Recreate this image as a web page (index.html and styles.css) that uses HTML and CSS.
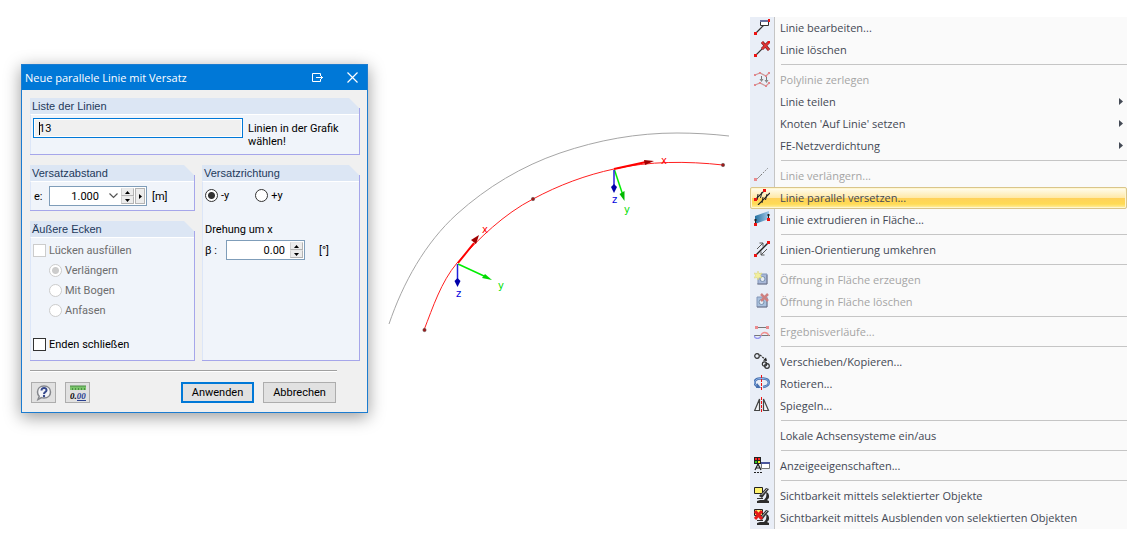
FILE: index.html
```html
<!DOCTYPE html>
<html lang="de">
<head>
    <meta charset="UTF-8">
    <meta name="viewport" content="width=device-width, initial-scale=1.0">
    <title>Neue parallele Linie mit Versatz</title>
    <link rel="stylesheet" href="styles.css">
</head>
<body>
    <!-- Dialog -->
    <form class="dialog">
        <header class="titlebar">
            <h1>Neue parallele Linie mit Versatz</h1>
            <button type="button" class="title-btn" aria-label="Andocken">
                <svg width="12" height="10" viewBox="0 0 12 10"><path d="M8.500 3V.5H.5v8h8V6M4 4.500h7M9.500 3v3" fill="none" stroke="#fff"/></svg>
            </button>
            <button type="button" class="title-btn" aria-label="Schließen">
                <svg width="11" height="11" viewBox="0 0 11 11"><path d="M.5.5l10 10M10.500.5l-10 10" fill="none" stroke="#fff" stroke-width="1.200"/></svg>
            </button>
        </header>

        <div class="dialog-body">
            <section class="group group-lines">
                <h2>Liste der Linien</h2>
                <div class="group-content lines-row">
                    <input type="text" id="lines" class="lines-input" value="13">
                    <label for="lines">Linien in der Grafik wählen!</label>
                </div>
            </section>

            <div class="columns">
                <div class="column">
                    <section class="group">
                        <h2>Versatzabstand</h2>
                        <div class="group-content field-row">
                            <label for="offset">e:</label>
                            <div class="field offset-field">
                                <input type="text" id="offset" value="1.000">
                                <button type="button" class="drop" aria-label="Liste öffnen">
                                    <svg width="9" height="6" viewBox="0 0 9 6"><path d="M.5.5l4 4 4-4" fill="none" stroke="#555" stroke-width="1.200"/></svg>
                                </button>
                                <div class="spin">
                                    <button type="button" aria-label="Mehr"><svg width="5" height="3" viewBox="0 0 5 3"><path d="M0 3h5L2.500 0z"/></svg></button>
                                    <button type="button" aria-label="Weniger"><svg width="5" height="3" viewBox="0 0 5 3"><path d="M0 0h5L2.500 3z"/></svg></button>
                                </div>
                                <button type="button" class="more" aria-label="Auswahl"><svg width="3" height="5" viewBox="0 0 3 5"><path d="M0 0v5l3-2.500z"/></svg></button>
                            </div>
                            <span>[m]</span>
                        </div>
                    </section>

                    <section class="group group-grow">
                        <h2>Äußere Ecken</h2>
                        <div class="group-content options">
                            <label class="option"><input type="checkbox" disabled> Lücken ausfüllen</label>
                            <label class="option sub"><input type="radio" name="corner" checked disabled> Verlängern</label>
                            <label class="option sub"><input type="radio" name="corner" disabled> Mit Bogen</label>
                            <label class="option sub"><input type="radio" name="corner" disabled> Anfasen</label>
                            <label class="option last"><input type="checkbox"> Enden schließen</label>
                        </div>
                    </section>
                </div>

                <section class="group">
                    <h2>Versatzrichtung</h2>
                    <div class="group-content direction">
                        <div class="radio-row">
                            <label class="option"><input type="radio" name="dir" checked> -y</label>
                            <label class="option"><input type="radio" name="dir"> +y</label>
                        </div>
                        <p>Drehung um x</p>
                        <div class="field-row">
                            <label for="beta">β :</label>
                            <div class="field beta-field">
                                <input type="text" id="beta" value="0.00">
                                <div class="spin">
                                    <button type="button" aria-label="Mehr"><svg width="5" height="3" viewBox="0 0 5 3"><path d="M0 3h5L2.500 0z"/></svg></button>
                                    <button type="button" aria-label="Weniger"><svg width="5" height="3" viewBox="0 0 5 3"><path d="M0 0h5L2.500 3z"/></svg></button>
                                </div>
                            </div>
                            <span class="unit">[°]</span>
                        </div>
                    </div>
                </section>
            </div>

            <footer class="dialog-footer">
                <button type="button" class="tool-btn" aria-label="Hilfe">
                    <svg width="16" height="16" viewBox="0 0 16 16">
                        <path d="M8 1c4 0 6.500 2.500 6.500 6S12 13 8 13c-1 0-2-.2-2.500-.4L2 14.500l1.200-3.300C2 10 1.500 8.500 1.500 7 1.500 3.500 4 1 8 1z" fill="#f4f5f8" stroke="#85878c" stroke-width="1.500"/>
                        <path d="M5.500 5.500C5.500 2 10.800 2.300 10.500 5.300 10.300 7 8 7 8 9" fill="none" stroke="#35488c" stroke-width="2"/>
                        <circle cx="8" cy="11" r="1.200" fill="#35488c"/>
                    </svg>
                </button>
                <button type="button" class="tool-btn" aria-label="Einheiten">
                    <svg width="16" height="16" viewBox="0 0 16 16">
                        <path d="M0 1h16v4H0z" fill="#79c56a"/>
                        <path d="M0 1h16M2.500 3v2M5.500 3v2M8.500 3v2M11.500 3v2M14.500 3v2" fill="none" stroke="#4d8a46"/>
                        <text x="0" y="14" class="digits">0.<tspan fill="#2b4191">00</tspan></text>
                        <path d="M7 15.500h9" stroke="#2b4191"/>
                    </svg>
                </button>
                <button type="submit" class="push primary">Anwenden</button>
                <button type="button" class="push">Abbrechen</button>
            </footer>
        </div>
    </form>

    <!-- Line geometry with local axes -->
    <svg class="plot" viewBox="389 131 340 202" role="img" aria-label="Parallele Linie">
        <path d="M389 324C403 283 425 243 457 214 487 187 522 166 560 153 598 140 637 133 677 133 694 133 712 134 729 136" fill="none" stroke="#a6a6a6"/>
        <path d="M424 330C433 307 441 282 457 263 479 238 504 214 533 199 559 185 586 175 614 169 649 161 687 161 723 165" fill="none" stroke="#ff2020"/>
        <g fill="#a01818" stroke="#555" stroke-width=".5">
            <circle cx="424.500" cy="330" r="1.700"/>
            <circle cx="533" cy="199" r="1.700"/>
            <circle cx="723" cy="165" r="1.700"/>
        </g>

        <path d="M458 263l16-20" stroke="#f00" stroke-width="2"/>
        <path d="M479 235l-8 5 5 4z" fill="#a00000"/>
        <path d="M458 264l26 12" stroke="#0e0" stroke-width="1.500"/>
        <path d="M492 280l-7-6-3 4z" fill="#00d800"/>
        <path d="M457.500 264v17" stroke="#22d" stroke-width="1.500"/>
        <path d="M457.500 287l-3-6 3-3 3 3z" fill="#00a"/>
        <text x="482" y="233" fill="#f00">x</text>
        <text x="498" y="289" fill="#0d0">y</text>
        <text x="456" y="297" fill="#00d">z</text>

        <path d="M614 169l32-7" stroke="#f00" stroke-width="2"/>
        <path d="M654 161l-10-1 1 5z" fill="#a00000"/>
        <path d="M614.500 170l8 24" stroke="#0e0" stroke-width="1.500"/>
        <path d="M624.500 201l-5-7 5-3z" fill="#00b800"/>
        <path d="M614 170v17" stroke="#22d" stroke-width="1.500"/>
        <path d="M614 193l-3-6 3-3 3 3z" fill="#00a"/>
        <text x="661" y="164" fill="#f00">x</text>
        <text x="624" y="213" fill="#0d0">y</text>
        <text x="612" y="203" fill="#00d">z</text>
    </svg>

    <!-- Context menu -->
    <ul class="menu">
        <li><button type="button">
            <svg class="icon" viewBox="0 0 16 16"><path d="M2 14l8-8" stroke="#333" stroke-width="1.200"/><path d="M6.500 1.500h8v5h-8z" fill="#fff" stroke="#333"/><path d="M6 1h8v2H6z" fill="#68719f"/><path d="M0 13h3v3H0zM14 0h2v3h-2z" fill="#e11"/></svg>
            Linie bearbeiten...</button></li>
        <li><button type="button">
            <svg class="icon" viewBox="0 0 16 16"><path d="M2 14L14 2" stroke="#333" stroke-width="1.200"/><path d="M8 1l7 8M15 1L8 8" stroke="#7a2020" stroke-width="3"/><path d="M8 1l7 8M15 1L8 8" stroke="#e03434" stroke-width="1.800"/><path d="M0 13h3v3H0zM14 0h2v2h-2z" fill="#e11"/></svg>
            Linie löschen</button></li>
        <li class="separator"></li>
        <li><button type="button" disabled>
            <svg class="icon" viewBox="0 0 16 16"><path d="M1 4l5-2 6 3 3-3M1 14l5-2 6 3 3-3" fill="none" stroke="#c99" stroke-width="1.200"/><path d="M7.500 5v5M12.500 6v5" stroke="#777"/><path d="M5.500 8h4l-2 3zM10.500 9h4l-2 3z" fill="#888"/><path d="M0 3h2v2H0zM5 1h2v2H5zM11 4h2v2h-2zM14 1h2v2h-2zM0 13h2v2H0zM5 11h2v2H5zM11 14h2v2h-2zM14 11h2v2h-2z" fill="#e4868c"/></svg>
            Polylinie zerlegen</button></li>
        <li><button type="button"><span class="icon"></span>Linie teilen<svg class="arrow" viewBox="0 0 4 7"><path d="M0 0v7l4-3.500z"/></svg></button></li>
        <li><button type="button"><span class="icon"></span>Knoten 'Auf Linie' setzen<svg class="arrow" viewBox="0 0 4 7"><path d="M0 0v7l4-3.500z"/></svg></button></li>
        <li><button type="button"><span class="icon"></span>FE-Netzverdichtung<svg class="arrow" viewBox="0 0 4 7"><path d="M0 0v7l4-3.500z"/></svg></button></li>
        <li class="separator"></li>
        <li><button type="button" disabled>
            <svg class="icon" viewBox="0 0 16 16"><path d="M2 13l5-5" stroke="#999"/><path d="M7 8l7-7" stroke="#777" stroke-dasharray="1.500 1.500"/><path d="M0 11h3v3H0z" fill="#ea8b8f"/></svg>
            Linie verlängern...</button></li>
        <li><button type="button" class="active">
            <svg class="icon" viewBox="0 0 16 16"><path d="M1 11L11 1M4 16L16 4" stroke="#222" stroke-width="1.200"/><path d="M4 5L3 11M8 3L6.500 9M9 8l-1 6M13 5l-1.500 6" stroke="#222"/><path d="M0 9h3v3H0zM9 0h3v3H9z" fill="#e11"/></svg>
            Linie parallel versetzen...</button></li>
        <li><button type="button">
            <svg class="icon" viewBox="0 0 16 16"><defs><linearGradient id="face"><stop offset="0" stop-color="#24709f"/><stop offset="1" stop-color="#a3c9ea"/></linearGradient></defs><path d="M1 5l14-5v8L1 13z" fill="url(#face)"/><path d="M1.500 8v5M14.500 3v5M0 9h3M13 4h3" stroke="#222"/><path d="M0 12h3v3H0zM13 7h3v3h-3z" fill="#e11"/></svg>
            Linie extrudieren in Fläche...</button></li>
        <li class="separator"></li>
        <li><button type="button">
            <svg class="icon" viewBox="0 0 16 16"><path d="M2 14L14 2" stroke="#222" stroke-width="1.400"/><path d="M3 8l6-6M5.500 2H9v3.500M13 8l-6 6M7 10.500V14h3.500" fill="none" stroke="#555"/><path d="M0 13h3v3H0zM13 0h3v3h-3z" fill="#e11"/></svg>
            Linien-Orientierung umkehren</button></li>
        <li class="separator"></li>
        <li><button type="button" disabled>
            <svg class="icon" viewBox="0 0 16 16"><path d="M4 3h9v10H4z" fill="#a9b9da" stroke="#8296b8"/><path d="M13 4v9H3" fill="none" stroke="#667" stroke-width=".7"/><circle cx="8.500" cy="8" r="2.500" fill="#e6edf5" stroke="#7890ad"/><path d="M4 0l1 2.500L8 2 6.500 4.500 8 7 5 6.500 4 9 3 6.500 0 7l1.500-2.500L0 2l3 .5z" fill="#f2ee9c" stroke="#d6d27c" stroke-width=".5"/></svg>
            Öffnung in Fläche erzeugen</button></li>
        <li><button type="button" disabled>
            <svg class="icon" viewBox="0 0 16 16"><path d="M3 4h10v10H3z" fill="#a9c0dd" stroke="#8296b8"/><path d="M13 5v9H3" fill="none" stroke="#667" stroke-width=".7"/><circle cx="7.500" cy="9" r="2.500" fill="#e6edf5" stroke="#7890ad"/><path d="M7 1l7 7M14 1L7 8" stroke="#ce8080" stroke-width="2.500"/></svg>
            Öffnung in Fläche löschen</button></li>
        <li class="separator"></li>
        <li><button type="button" disabled>
            <svg class="icon" viewBox="0 0 16 16"><path d="M2 4.500h12M0 12.500h16" stroke="#777"/><path d="M1 3h3v3H1zM12 3h3v3h-3z" fill="#ea8b8f"/><path d="M0 12.500c1 4 6 4 7 0" fill="none" stroke="#9494f0" stroke-width="1.300"/><path d="M7 12.500c1-4 6-4 8 0" fill="none" stroke="#f09090" stroke-width="1.300"/></svg>
            Ergebnisverläufe...</button></li>
        <li class="separator"></li>
        <li><button type="button">
            <svg class="icon" viewBox="0 0 16 16"><g fill="none" stroke="#333" stroke-width="1.200"><circle cx="3" cy="3" r="2.300"/><circle cx="10.500" cy="11" r="2.200"/><circle cx="13" cy="13" r="2.300"/><path d="M6 2l6 5" stroke-dasharray="2 1"/></g><path d="M13 8l-4-.5 3-3z" fill="#222"/></svg>
            Verschieben/Kopieren...</button></li>
        <li><button type="button">
            <svg class="icon" viewBox="0 0 16 16"><path d="M5 12C-1 10-1 4 6 3.500h3C17 4 16.500 11 9 12" fill="none" stroke="#466fae" stroke-width="2.400"/><path d="M5 12C-1 10-1 4 6 3.500h3C17 4 16.500 11 9 12" fill="none" stroke="#8bb0e4" stroke-width="1"/><path d="M2 13l1-5 4 5z" fill="#466fae"/><path d="M7.500 0v16" stroke="#e11" stroke-dasharray="3 1"/></svg>
            Rotieren...</button></li>
        <li><button type="button">
            <svg class="icon" viewBox="0 0 16 16"><path d="M.7 13.500h4.800V2zM14.500 13.500H9.500V2z" fill="#f5f7fa" stroke="#444" stroke-width="1.200"/><path d="M7.500 0v16" stroke="#e11" stroke-dasharray="3 1"/></svg>
            Spiegeln...</button></li>
        <li class="separator"></li>
        <li><button type="button"><span class="icon"></span>Lokale Achsensysteme ein/aus</button></li>
        <li class="separator"></li>
        <li><button type="button">
            <svg class="icon" viewBox="0 0 16 16"><path d="M0 0h7v7H0z" fill="#222"/><path d="M1 1h2v2H1z" fill="#f22"/><path d="M4 1h2v2H4z" fill="#f22"/><path d="M1 4h2v2H1z" fill="#2c2"/><path d="M4 4h2v2H4z" fill="#ee2"/><path d="M4 7L1 13M4 7l3 6M2 11h4" stroke="#222" stroke-width="1.200"/><path d="M0 15.500h8" stroke="#222" stroke-dasharray="2 1"/><path d="M7.500 5.500h8v6h-8z" fill="#fff" stroke="#777"/><path d="M7 5h9v2H7z" fill="#4a559b"/></svg>
            Anzeigeeigenschaften...</button></li>
        <li class="separator"></li>
        <li><button type="button">
            <svg class="icon" viewBox="0 0 16 16"><path d="M.5.5h8v6h-8z" fill="#fff36d" stroke="#222"/><path d="M5 9l7-8 3 1-7 9z" fill="#333"/><path d="M7.500 8L13 2" stroke="#bbb"/><path d="M12 5l2 1c2 3 1 6-1 7l2 1v2H3v-2l3-1h4c2-2 3-4 2-8z" fill="#2c2c2c"/><path d="M3 11h6v1H3z" fill="#333"/></svg>
            Sichtbarkeit mittels selektierter Objekte</button></li>
        <li><button type="button">
            <svg class="icon" viewBox="0 0 16 16"><path d="M.5.5h8v6h-8z" fill="#fff36d" stroke="#222"/><path d="M5 9l7-8 3 1-7 9z" fill="#333"/><path d="M7.500 8L13 2" stroke="#bbb"/><path d="M12 5l2 1c2 3 1 6-1 7l2 1v2H3v-2l3-1h4c2-2 3-4 2-8z" fill="#2c2c2c"/><path d="M3 11h6v1H3z" fill="#333"/><path d="M1 2l7 8M8 2l-7 8" stroke="#e51a1a" stroke-width="3"/></svg>
            Sichtbarkeit mittels Ausblenden von selektierten Objekten</button></li>
    </ul>
</body>
</html>
```

FILE: styles.css
```css
* {
    box-sizing: border-box;
}

body {
    margin: 0;
    padding: 17px 17px 17px 21px;
    display: grid;
    grid-template-columns: minmax(0, 347fr) minmax(0, 340fr) minmax(0, 377fr);
    gap: 21px;
    align-items: start;
    background: #fff;
    color: #000;
    font-family: Roboto, "Liberation Sans", sans-serif;
    font-size: 11px;
    line-height: 13px;
}

h1, h2, p {
    margin: 0;
    font-weight: normal;
}

button, input {
    margin: 0;
    padding: 0;
    font: inherit;
    color: inherit;
}

/* Dialog window */
.dialog {
    margin-top: 47px;
    border: 1px solid #1c7cd0;
    background: #f0f0f0;
    box-shadow: 0 4px 16px rgba(0, 0, 0, 0.4);
}

.titlebar {
    display: flex;
    align-items: center;
    height: 25px;
    padding: 0 7px 0 3px;
    background: #0078d7;
    color: #fff;
}

.titlebar h1 {
    flex: 1;
    font-family: "Open Sans", "Noto Sans", sans-serif;
    font-size: 11px;
}

.title-btn {
    display: flex;
    align-items: center;
    justify-content: center;
    width: 16px;
    height: 16px;
    margin-left: 18px;
    border: none;
    background: none;
}

.dialog-body {
    display: flex;
    flex-direction: column;
    gap: 10px;
    padding: 8px 7px 9px 8px;
}

/* Group boxes with a cut corner */
.group {
    padding: 0 1px 1px 0;
    background:
        linear-gradient(#a6a6ea, #a6a6ea) right bottom / 1px calc(100% - 10px) no-repeat,
        linear-gradient(#a6a6ea, #a6a6ea) left bottom / 100% 1px no-repeat;
    display: flex;
    flex-direction: column;
}

.group h2 {
    height: 16px;
    padding-left: 2px;
    background: #dce6f4;
    clip-path: polygon(0 0, calc(100% - 10px) 0, 100% 10px, 100% 100%, 0 100%);
    color: #1e395b;
    font-family: "Liberation Sans", Arial, sans-serif;
    font-size: 11px;
    line-height: 16px;
}

.group-content {
    flex: 1;
    padding: 4px 3px;
    border-top: 1px solid #fff;
    border-left: 1px solid #dce6f8;
    background: #f0f4fa;
}

.group-lines .group-content {
    padding: 3px 2px 6px;
}

.lines-row {
    display: flex;
    align-items: flex-start;
    gap: 5px;
}

.lines-row label {
    flex: 1;
    padding-top: 4px;
}

/* the thin line left of the value is the text cursor */
.lines-input {
    flex: 0 1 210px;
    min-width: 0;
    height: 20px;
    padding: 0 5px;
    border: 1px solid #0078d7;
    background: linear-gradient(#000, #000) 5px center / 1px 13px no-repeat #f0f0f0;
    box-shadow: inset 0 0 0 1px #fff;
    outline: none;
}

.columns {
    display: grid;
    grid-template-columns: 165fr 158fr;
    gap: 7px;
}

.column {
    display: flex;
    flex-direction: column;
    gap: 10px;
}

.group-grow {
    flex: 1;
}

.field-row {
    display: flex;
    align-items: center;
    gap: 5px;
}

.field-row label {
    width: 10px;
    white-space: nowrap;
}

.field {
    display: flex;
    align-items: center;
    height: 20px;
    padding: 1px;
    border: 1px solid #7f9db9;
    background: #fff;
}

.field input {
    flex: 1;
    min-width: 0;
    border: none;
    background: none;
    text-align: right;
    outline: none;
    font-size: 11px;
}

.offset-field {
    width: 98px;
}

.beta-field {
    width: 79px;
}

.beta-field input {
    padding-right: 5px;
}

.drop {
    display: flex;
    align-items: center;
    justify-content: center;
    width: 22px;
    padding-left: 6px;
    border: none;
    background: none;
}

.spin {
    display: flex;
    flex-direction: column;
    width: 13px;
    height: 16px;
}

.spin button, .more {
    flex: 1;
    display: flex;
    align-items: center;
    justify-content: center;
    border: 1px solid #b4b4b4;
    border-top-color: #e8e8e8;
    border-left-color: #d0d0d0;
    background: #ececec;
}

.more {
    flex: 0 0 10px;
    height: 16px;
    margin-left: 1px;
    border-color: #b4b4b4;
}

/* Check boxes and radio buttons */
.options {
    display: flex;
    flex-direction: column;
    gap: 4px;
    padding: 4px 2px 8px;
}

.option {
    display: flex;
    align-items: center;
    gap: 3px;
    height: 16px;
}

.option:has(:disabled) {
    color: #6d6d6d;
}

.option input {
    appearance: none;
    width: 13px;
    height: 13px;
    border: 1px solid #333;
    background: #fff;
}

.option input[type="radio"] {
    border-radius: 50%;
}

.option input[type="radio"]:checked {
    background: radial-gradient(circle, #333 3px, #fff 4px);
}

.option input:disabled {
    border-color: #ccc;
}

.option input[type="radio"]:checked:disabled {
    background: radial-gradient(circle, #ccc 3px, #fff 4px);
}

.sub {
    margin-left: 16px;
}

.last {
    margin-top: 14px;
}

.direction {
    padding: 5px 2px;
}

.radio-row {
    display: flex;
    gap: 26px;
    margin-bottom: 20px;
}

.direction .field-row {
    margin-top: 4px;
}

.direction .field-row label {
    width: 16px;
}

.unit {
    margin-left: 9px;
}

/* Buttons at the bottom */
.dialog-footer {
    display: flex;
    gap: 9px;
    margin-top: -1px;
    padding: 12px 24px 0 1px;
    background:
        linear-gradient(#a0a0a0, #a0a0a0) left top / calc(100% - 23px) 1px no-repeat,
        linear-gradient(#fff, #fff) left 1px / calc(100% - 23px) 1px no-repeat;
}

.tool-btn {
    display: flex;
    align-items: center;
    justify-content: center;
    width: 25px;
    height: 21px;
    border: 1px solid #adadad;
    background: #e1e1e1;
}

.digits {
    font-family: "Liberation Serif", serif;
    font-size: 9px;
    font-weight: bold;
    font-style: italic;
}

.push {
    width: 73px;
    height: 21px;
    border: 1px solid #adadad;
    background: #e1e1e1;
}

.primary {
    margin-left: auto;
    border: 2px solid #0078d7;
}

/* Drawing */
.plot {
    width: 100%;
    margin-top: 114px;
    overflow: visible;
}

.plot text {
    font-family: "DejaVu Sans", sans-serif;
    font-size: 10px;
}

/* Context menu */
.menu {
    margin: 0;
    padding: 0;
    list-style: none;
    background: linear-gradient(to right, #e9eef7 24px, #c5c5c5 24px, #c5c5c5 25px, #fafafa 25px);
    color: #434854;
    font-family: "Open Sans", "Noto Sans", sans-serif;
}

.menu button {
    display: flex;
    align-items: center;
    gap: 10px;
    width: 100%;
    height: 22px;
    padding: 0 3px 2px;
    border: 1px solid transparent;
    border-radius: 2px;
    background: none;
    text-align: left;
    white-space: nowrap;
}

.menu button:disabled {
    color: #a5a5a5;
}

.menu .active {
    border-color: #d9c58b;
    background: linear-gradient(#fffdf0, #ffe9a8 48%, #ffd15a 50%, #ffdb55 80%, #fff0a8);
    box-shadow: inset 0 0 0 1px #fff6cf;
}

.icon {
    flex: none;
    width: 16px;
    height: 16px;
}

.arrow {
    width: 4px;
    height: 7px;
    margin-left: auto;
    fill: #444a55;
}

.separator {
    height: 8px;
    margin-left: 31px;
    background: linear-gradient(#c5c5c5, #c5c5c5) left 3px / 100% 1px no-repeat;
}
```
